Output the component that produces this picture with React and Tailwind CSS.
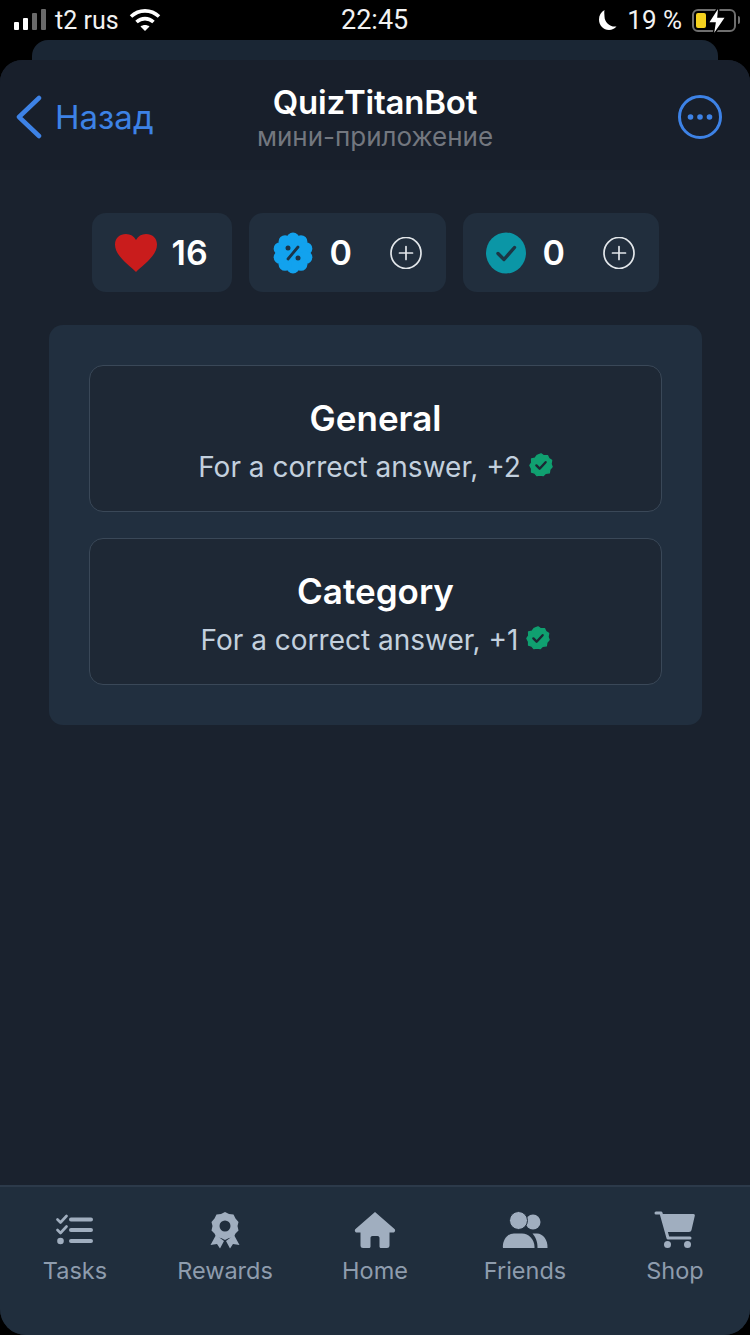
import React from 'react'

const fontInter = { fontFamily: 'Inter, "Noto Sans", sans-serif' }

function TasksIcon() {
  return (
    <svg width="38" height="32" viewBox="0 0 38 32" fill="none">
      <path d="M1.500 5.500 L4.500 8.500 L10.500 2" stroke="#a0aebf" strokeWidth="2.600" strokeLinecap="round" strokeLinejoin="round" />
      <path d="M1.500 16 L4.500 19 L10.500 12.500" stroke="#a0aebf" strokeWidth="2.600" strokeLinecap="round" strokeLinejoin="round" />
      <circle cx="4.500" cy="27" r="3.300" fill="#a0aebf" />
      <path d="M15 5.500 H35 M15 16 H35 M15 27 H35" stroke="#a0aebf" strokeWidth="4" strokeLinecap="round" />
    </svg>
  )
}

function RewardsIcon() {
  return (
    <svg width="30" height="38" viewBox="0 0 30 38">
      <path d="M6 24 L0.500 34 L7 33 L10 37.500 L14 30 Z M24 24 L29.500 34 L23 33 L20 37.500 L16 30 Z" fill="#a0aebf" />
      <path
        fillRule="evenodd"
        d="M15 1 L19 3 L23.500 3.500 L25.500 7.500 L28.500 11 L27.500 15 L28.500 19.500 L25.500 22.500 L23.500 26.500 L19 27 L15 29 L11 27 L6.500 26.500 L4.500 22.500 L1.500 19.500 L2.500 15 L1.500 11 L4.500 7.500 L6.500 3.500 L11 3 Z M15 9.500 A5.500 5.500 0 1 0 15 20.500 A5.500 5.500 0 1 0 15 9.500 Z"
        fill="#a0aebf"
      />
    </svg>
  )
}

function HomeIcon() {
  return (
    <svg width="42" height="38" viewBox="0 0 42 38">
      <path
        d="M21 1 L40.500 18 C41.800 19.300 41 21.500 39 21.500 H35.500 V34.500 C35.500 36.200 34.300 37 33 37 H27 C26 37 25.500 36.400 25.500 35.500 V27 C25.500 25.800 24.700 25 23.500 25 H18.500 C17.300 25 16.500 25.800 16.500 27 V35.500 C16.500 36.400 16 37 15 37 H9 C7.700 37 6.500 36.200 6.500 34.500 V21.500 H3 C1 21.500 0.200 19.300 1.500 18 Z"
        fill="#a0aebf"
      />
    </svg>
  )
}

function FriendsIcon() {
  return (
    <svg width="46" height="38" viewBox="0 0 46 38">
      <circle cx="31" cy="11" r="7.500" fill="#a0aebf" />
      <path d="M35.500 37 C35.800 30 33 25.500 30.500 22.500 H35 C41 22.500 46 29 45.500 37 Z" fill="#a0aebf" />
      <circle cx="16.500" cy="9.500" r="9" fill="#a0aebf" stroke="#202e3d" strokeWidth="1" />
      <path d="M1 37 C0 30 5 22.500 12 22.500 H20 C27 22.500 33 29 32.500 37 Z" fill="#a0aebf" />
    </svg>
  )
}

function ShopIcon() {
  return (
    <svg width="42" height="38" viewBox="0 0 42 38">
      <path d="M2 2 H7 L14 27 H36" stroke="#a0aebf" strokeWidth="3" fill="none" strokeLinecap="round" strokeLinejoin="round" />
      <path d="M8 3 H39.500 C40.500 3 41 3.800 40.800 4.700 L37.500 19 C37.200 20.300 36.300 21 35 21 H13 Z" fill="#a0aebf" />
      <circle cx="13.500" cy="33.500" r="3.500" fill="#a0aebf" />
      <circle cx="33.500" cy="33.500" r="3.500" fill="#a0aebf" />
    </svg>
  )
}

function PlusCircle() {
  return (
    <svg width="32" height="32" viewBox="0 0 32 32" fill="none" stroke="#e2e6ea" strokeWidth="1.700">
      <ellipse cx="16" cy="16" rx="15" ry="15.500" />
      <path d="M16 9.500 V22.500 M9.500 16 H22.500" strokeLinecap="round" />
    </svg>
  )
}

function VerifiedBadge() {
  return (
    <svg width="24" height="24" viewBox="0 0 26 26">
      <path
        d="M13 1 L16 3 L20 2.800 L21.500 6 L24.500 8 L23.800 12 L25 15 L22.500 18 L22 21.500 L18 22 L15.500 24.500 L12 23.800 L8.500 24.500 L6.200 21.800 L2.800 20.800 L2.800 17 L1 13.500 L3 10.500 L2.800 6.500 L6.500 5.500 L9 2.500 Z"
        fill="#10a070"
        stroke="#10a070"
        strokeWidth="1.500"
        strokeLinejoin="round"
      />
      <path d="M8 13.500 L11.500 17 L18 10" fill="none" stroke="#1c2733" strokeWidth="2.600" strokeLinecap="round" strokeLinejoin="round" />
    </svg>
  )
}

// scalloped edge of the percent badge, ten bumps round the centre
const scallops = [0, 36, 72, 108, 144, 180, 216, 252, 288, 324].map(deg => ({
  cx: 20 + 13.5 * Math.sin((deg * Math.PI) / 180),
  cy: 21 - 14 * Math.cos((deg * Math.PI) / 180)
}))

function StatusBar() {
  return (
    <div className="h-10 shrink-0 bg-black text-[#f2f2f2] flex items-center justify-between pl-[14px] pr-[10px] text-[25px] relative" style={{ fontFamily: 'Roboto, Inter, sans-serif' }}>
      <div className="flex items-center">
        <div className="flex items-end gap-[4px] h-[21px] mt-[-1px]">
          <span className="w-[5px] h-[8px] bg-white rounded-[1px]" />
          <span className="w-[5px] h-[12px] bg-white rounded-[1px]" />
          <span className="w-[5px] h-[17px] bg-[#6a6a6a] rounded-[1px]" />
          <span className="w-[5px] h-[21px] bg-[#6a6a6a] rounded-[1px]" />
        </div>
        <span className="ml-[9px] leading-none">t2 rus</span>
        <svg className="ml-[10px]" width="32" height="24" viewBox="0 0 32 24" fill="none" stroke="#fff" strokeWidth="3.600">
          <path d="M2 8.500 C10 1 22 1 30 8.500" />
          <path d="M7.500 14 C12.500 9.500 19.500 9.500 24.500 14" />
          <path d="M16 23 L11.500 18.500 C14 16.500 18 16.500 20.500 18.500 Z" fill="#fff" stroke="none" />
        </svg>
      </div>
      <span className="absolute left-[341px] leading-none text-[27px]">22:45</span>
      <div className="flex items-center">
        <svg width="20" height="22" viewBox="0 0 20 22">
          <path d="M7.500 1 C4 3 2 6.500 2 10.500 C2 16.500 6.500 21 12 21 C15 21 17.500 19.800 19.500 17.500 C13 18.500 7.500 13 7.500 7.500 C7.500 5.500 7 3 7.500 1 Z" fill="#fff" />
        </svg>
        <span className="ml-[10px] leading-none text-[26px]">19 %</span>
        <div className="ml-[10px] w-[44px] h-[23px] border-2 border-[#6f6f6f] rounded-[6px] relative p-[2px]">
          <div className="w-[10px] h-full bg-[#f6d21f] rounded-[2px]" />
          <svg className="absolute left-[12px] top-[-6px]" width="22" height="32" viewBox="0 0 22 32">
            <path d="M13 1 L2 18 H9 L7 31 L20 12 H12 Z" fill="#fff" stroke="#000" strokeWidth="1.500" />
          </svg>
        </div>
        <span className="ml-[2px] w-[2px] h-[8px] bg-[#6f6f6f] rounded-r" />
      </div>
    </div>
  )
}

function Header() {
  return (
    <div className="h-[110px] shrink-0 bg-[#181f2b] flex items-center justify-between pl-[16px] pr-[28px] relative">
      <div className="flex items-center text-[#3d82e6] mt-[4px]">
        <svg width="26" height="44" viewBox="0 0 26 44" fill="none" stroke="currentColor" strokeWidth="4.500" strokeLinecap="round" strokeLinejoin="round">
          <path d="M23 3 L3 22 L23 41" />
        </svg>
        <span className="ml-[13px] text-[33px] leading-none">Назад</span>
      </div>
      <div className="absolute inset-x-0 top-[22px] flex flex-col items-center pointer-events-none">
        <span className="text-white text-[33px] leading-[40px] font-semibold tracking-[-0.2px]">QuizTitanBot</span>
        <span className="text-[#73777f] text-[26px] leading-[30px]">мини-приложение</span>
      </div>
      <svg className="mt-[4px]" width="44" height="44" viewBox="0 0 44 44" fill="none">
        <circle cx="22" cy="22" r="20.500" stroke="#3d82e6" strokeWidth="3" />
        <circle cx="12.500" cy="22" r="2.800" fill="#3d82e6" />
        <circle cx="22" cy="22" r="2.800" fill="#3d82e6" />
        <circle cx="31.500" cy="22" r="2.800" fill="#3d82e6" />
      </svg>
    </div>
  )
}

function Stats() {
  return (
    <div className="flex justify-center gap-[17px] mt-[43px]">
      <div className="w-[140px] h-[79px] rounded-[14px] bg-[#212e3d] flex items-center pl-[23px]">
        <svg width="42" height="38" viewBox="0 0 42 38">
          <path d="M21 38 C14 31 0 22 0 10.500 C0 4 5 0 11 0 C15.500 0 19 2 21 6 C23 2 26.500 0 31 0 C37 0 42 4 42 10.500 C42 22 28 31 21 38 Z" fill="#c91c1c" />
        </svg>
        <span className="ml-[15px] text-white text-[34px] font-semibold leading-none">16</span>
      </div>
      <div className="w-[197px] h-[79px] rounded-[14px] bg-[#212e3d] flex items-center pl-[24px]">
        <svg width="40" height="42" viewBox="0 0 40 42">
          <circle cx="20" cy="21" r="16" fill="#12a2ee" />
          {scallops.map(s => (
            <circle key={s.cx + '-' + s.cy} cx={s.cx} cy={s.cy} r="6.500" fill="#12a2ee" />
          ))}
          <path d="M25 15 L15 27" stroke="#1b3347" strokeWidth="2.800" strokeLinecap="round" />
          <circle cx="15" cy="16" r="2.500" fill="#1b3347" />
          <circle cx="25" cy="26" r="2.500" fill="#1b3347" />
        </svg>
        <span className="ml-[17px] w-[60px] text-white text-[34px] font-semibold leading-none">0</span>
        <PlusCircle />
      </div>
      <div className="w-[196px] h-[79px] rounded-[14px] bg-[#212e3d] flex items-center pl-[23px]">
        <svg width="40" height="42" viewBox="0 0 40 42">
          <ellipse cx="20" cy="21" rx="20" ry="20.500" fill="#0b96a6" />
          <path d="M12 21.500 L18 27.500 L28.500 15.500" fill="none" stroke="#1c3645" strokeWidth="3.400" strokeLinecap="round" strokeLinejoin="round" />
        </svg>
        <span className="ml-[17px] w-[60px] text-white text-[34px] font-semibold leading-none">0</span>
        <PlusCircle />
      </div>
    </div>
  )
}

function ModeCard({ title, reward }) {
  return (
    <div className="h-[147px] rounded-[14px] border border-[#3a4858] bg-[#1e2835] flex flex-col items-center pt-[29px]">
      <span className="text-white text-[35px] leading-[46px] font-semibold">{title}</span>
      <div className="flex items-center mt-[3px]">
        <span className="text-[#c3d0de] text-[28px] leading-[46px]">For a correct answer, {reward}</span>
        <span className="ml-[8px] mb-[4px]"><VerifiedBadge /></span>
      </div>
    </div>
  )
}

const navItems = [
  { label: 'Tasks', icon: <TasksIcon /> },
  { label: 'Rewards', icon: <RewardsIcon /> },
  { label: 'Home', icon: <HomeIcon /> },
  { label: 'Friends', icon: <FriendsIcon /> },
  { label: 'Shop', icon: <ShopIcon /> }
]

export default function App() {
  return (
    <div className="w-[750px] h-[1335px] bg-black flex flex-col overflow-hidden" style={fontInter}>
      <StatusBar />
      <div className="h-5 shrink-0 mx-[32px] rounded-t-[16px] bg-[#1a2634]" />
      <div className="flex-1 flex flex-col rounded-t-[22px] rounded-b-[26px] overflow-hidden bg-[#1a222e]">
        <Header />
        <div className="flex-1">
          <Stats />
          <div className="mx-[49px] mt-[33px] h-[400px] w-[653px] rounded-[14px] bg-[#212f3f] p-[40px] flex flex-col gap-[26px]">
            <ModeCard title="General" reward="+2" />
            <ModeCard title="Category" reward="+1" />
          </div>
        </div>
        <div className="h-[150px] shrink-0 bg-[#202e3d] border-t-2 border-[#2c3a4a] grid grid-cols-5 pt-[24px]">
          {navItems.map(item => (
            <div key={item.label} className="flex flex-col items-center">
              <div className="h-[38px] flex items-center justify-center">{item.icon}</div>
              <span className="text-[#8e9cad] text-[23.5px] leading-[30px] mt-[7px]">{item.label}</span>
            </div>
          ))}
        </div>
      </div>
    </div>
  )
}
